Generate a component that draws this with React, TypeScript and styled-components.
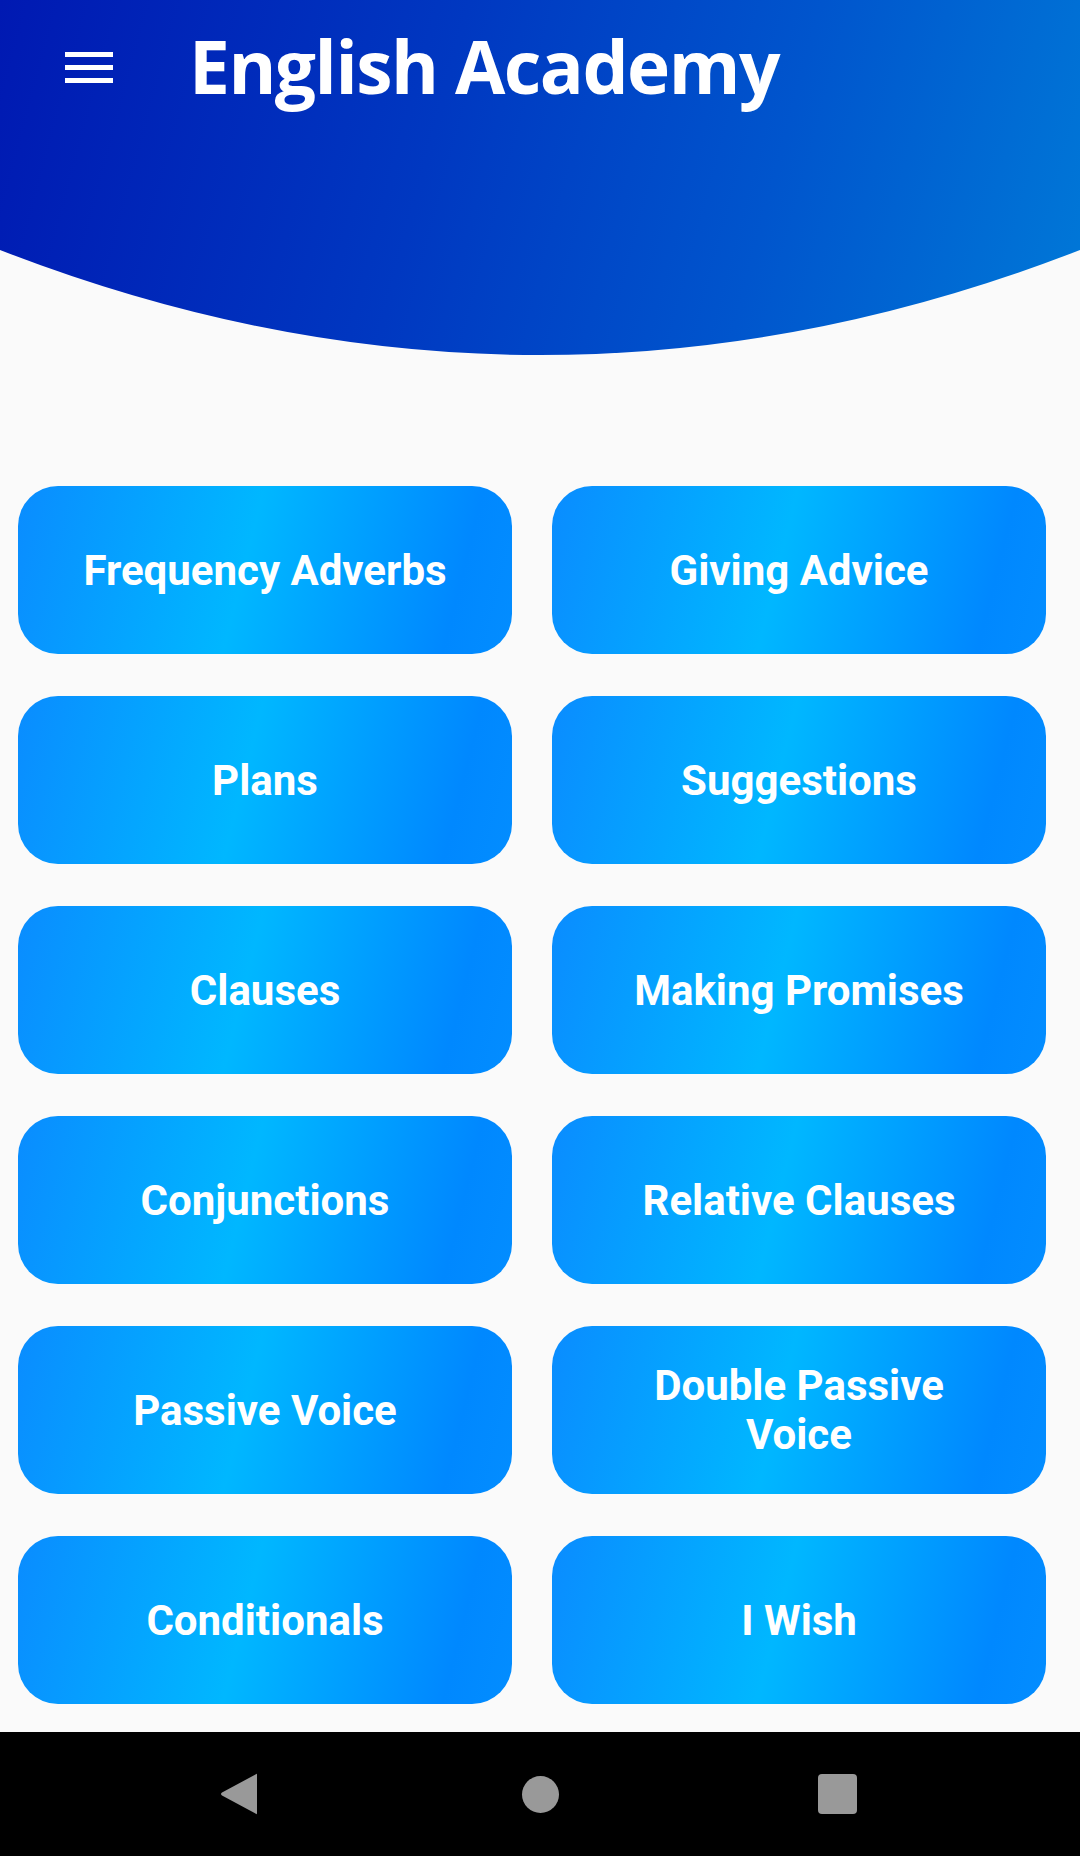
import React from "react";
import styled, { createGlobalStyle } from "styled-components";

const GlobalStyle = createGlobalStyle`
  html, body {
    margin: 0;
    padding: 0;
    background: #fafafa;
  }
  * { box-sizing: border-box; }
`;

const Screen = styled.div`
  width: 1080px;
  height: 1856px;
  display: flex;
  flex-direction: column;
  background: #fafafa;
  overflow: hidden;
`;

const Header = styled.header`
  height: 355px;
  flex: none;
  background: linear-gradient(105deg, #0019b2 0%, #0038c1 40%, #0055cd 70%, #0079d8 100%);
  clip-path: path("M0 0 H1080 V250 Q540 460 0 250 Z");
  padding: 29px 0 0 65px;
`;

const TopRow = styled.div`
  display: flex;
  align-items: flex-start;
  gap: 76px;
`;

const MenuButton = styled.button`
  border: none;
  background: transparent;
  padding: 23px 0 0 0;
  margin: 0;
  width: 48px;
  display: flex;
  flex-direction: column;
  gap: 8px;
  cursor: pointer;
`;

const MenuBar = styled.span`
  display: block;
  width: 48px;
  height: 5px;
  background: #ffffff;
`;

const Title = styled.h1`
  margin: 0;
  font-family: "Open Sans", "DejaVu Sans", sans-serif;
  font-weight: 700;
  font-size: 73px;
  line-height: 73px;
  color: #ffffff;
  letter-spacing: -1.5px;
`;

const Grid = styled.main`
  margin-top: 131px;
  padding: 0 34px 0 18px;
  display: grid;
  grid-template-columns: 494px 494px;
  grid-auto-rows: 168px;
  column-gap: 40px;
  row-gap: 42px;
  flex: 1;
`;

const TopicButton = styled.button`
  border: none;
  border-radius: 40px;
  background: linear-gradient(104deg, #0a8cff 0%, #00b7ff 46%, #0088ff 87%, #038dff 100%);
  color: #ffffff;
  font-family: Roboto, "Liberation Sans", sans-serif;
  font-weight: 700;
  font-size: 42px;
  line-height: 49px;
  text-align: center;
  padding: 0 52px;
  display: flex;
  align-items: center;
  justify-content: center;
  cursor: pointer;
`;

const NavBar = styled.nav`
  height: 124px;
  flex: none;
  background: #000000;
  display: flex;
  align-items: center;
  justify-content: center;
  gap: 262px;
  padding-right: 5px;
`;

const BackIcon = styled.svg`
  display: block;
  width: 40px;
  height: 44px;
  margin-right: 1px;
`;

const HomeDot = styled.div`
  width: 37px;
  height: 37px;
  border-radius: 50%;
  background: #999999;
`;

const RecentSquare = styled.div`
  width: 39px;
  height: 40px;
  border-radius: 4px;
  background: #999999;
  margin-left: -3px;
`;

const topics = [
  "Frequency Adverbs",
  "Giving Advice",
  "Plans",
  "Suggestions",
  "Clauses",
  "Making Promises",
  "Conjunctions",
  "Relative Clauses",
  "Passive Voice",
  "Double Passive Voice",
  "Conditionals",
  "I Wish",
];

export default function App() {
  return (
    <Screen>
      <GlobalStyle />
      <Header>
        <TopRow>
          <MenuButton aria-label="menu">
            <MenuBar />
            <MenuBar />
            <MenuBar />
          </MenuButton>
          <Title>English Academy</Title>
        </TopRow>
      </Header>
      <Grid>
        {topics.map((t) => (
          <TopicButton key={t}>{t}</TopicButton>
        ))}
      </Grid>
      <NavBar>
        <BackIcon viewBox="0 0 40 44">
          <path
            d="M38 3 L38 41 Q38 43 36.5 41.5 L3 23.5 Q1 22 3 20.5 L36.5 2.5 Q38 1 38 3 Z"
            fill="#999999"
          />
        </BackIcon>
        <HomeDot />
        <RecentSquare />
      </NavBar>
    </Screen>
  );
}
